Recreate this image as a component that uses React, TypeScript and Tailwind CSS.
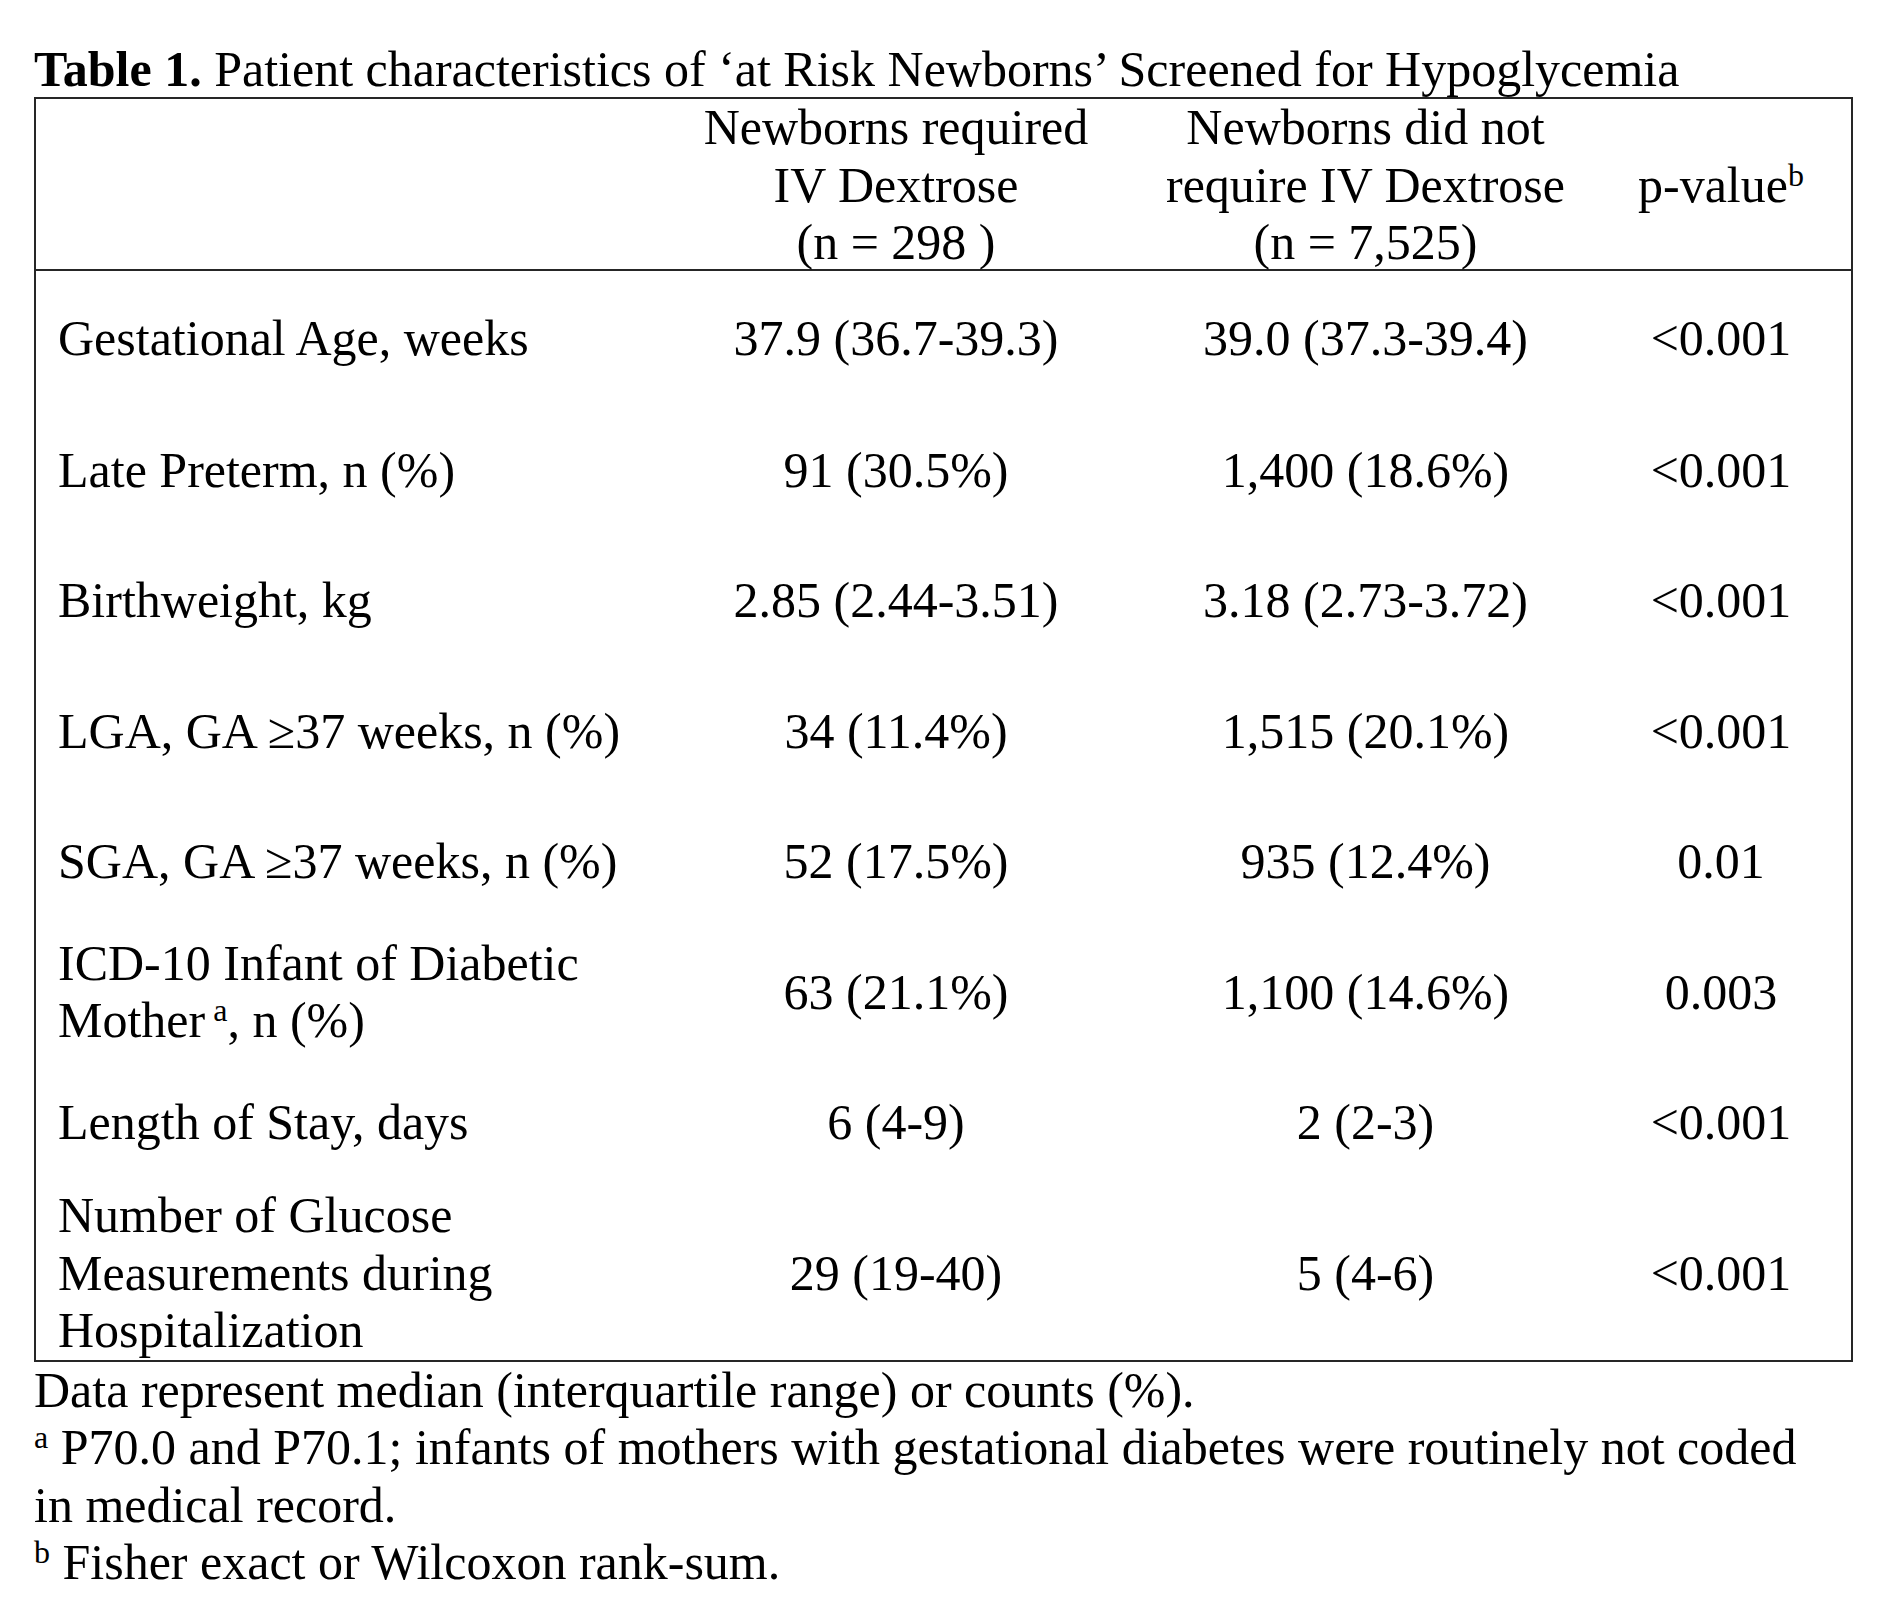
type Row = {
  label: React.ReactNode;
  required: string;
  notRequired: string;
  p: string;
  height: string;
};

const rows: Row[] = [
  {
    label: "Gestational Age, weeks",
    required: "37.9 (36.7-39.3)",
    notRequired: "39.0 (37.3-39.4)",
    p: "<0.001",
    height: "h-[132px] pt-[4px]",
  },
  {
    label: "Late Preterm, n (%)",
    required: "91 (30.5%)",
    notRequired: "1,400 (18.6%)",
    p: "<0.001",
    height: "h-[130.5px] pt-[4px]",
  },
  {
    label: "Birthweight, kg",
    required: "2.85 (2.44-3.51)",
    notRequired: "3.18 (2.73-3.72)",
    p: "<0.001",
    height: "h-[130.5px] pt-[4px]",
  },
  {
    label: "LGA, GA \u226537 weeks, n (%)",
    required: "34 (11.4%)",
    notRequired: "1,515 (20.1%)",
    p: "<0.001",
    height: "h-[130.5px] pt-[4px]",
  },
  {
    label: "SGA, GA \u226537 weeks, n (%)",
    required: "52 (17.5%)",
    notRequired: "935 (12.4%)",
    p: "0.01",
    height: "h-[130.5px] pt-[4px]",
  },
  {
    label: (
      <>
        ICD-10 Infant of Diabetic
        <br />
        Mother<sup className="text-[32px]"> a</sup>, n (%)
      </>
    ),
    required: "63 (21.1%)",
    notRequired: "1,100 (14.6%)",
    p: "0.003",
    height: "h-[130.5px] pt-[4px]",
  },
  {
    label: "Length of Stay, days",
    required: "6 (4-9)",
    notRequired: "2 (2-3)",
    p: "<0.001",
    height: "h-[130.5px] pt-[4px]",
  },
  {
    label: (
      <>
        Number of Glucose
        <br />
        Measurements during
        <br />
        Hospitalization
      </>
    ),
    required: "29 (19-40)",
    notRequired: "5 (4-6)",
    p: "<0.001",
    height: "h-auto pt-[1px]",
  },
];

const cols = "grid grid-cols-[616px_488px_451px_260px]";

export default function App() {
  return (
    <div className="min-h-screen bg-white pl-[34px] pt-[40px] font-['Liberation_Serif','Times_New_Roman',serif] text-[50px] leading-[57.5px] text-black">
      <p className="whitespace-nowrap pt-[1px] leading-[56px]">
        <span className="font-bold">Table 1.</span> Patient characteristics of {"\u2018"}at Risk Newborns{"\u2019"}{" "}
        Screened for Hypoglycemia
      </p>

      <div className="w-[1819px] border-2 border-[#262626]">
        <div className={`${cols} h-[172px] border-b-2 border-[#262626]`}>
          <div />
          <div className="flex items-center justify-center text-center whitespace-nowrap">
            <p>
              Newborns required
              <br />
              IV Dextrose
              <br />
              (n = 298 )
            </p>
          </div>
          <div className="flex items-center justify-center text-center whitespace-nowrap">
            <p>
              Newborns did not
              <br />
              require IV Dextrose
              <br />
              (n = 7,525)
            </p>
          </div>
          <div className="flex items-center justify-center text-center whitespace-nowrap">
            <p>
              p-value<sup className="text-[32px]">b</sup>
            </p>
          </div>
        </div>

        {rows.map((row, i) => (
          <div key={i} className={`${cols} ${row.height}`}>
            <div className="flex items-center whitespace-nowrap pl-[22px]">
              <p>{row.label}</p>
            </div>
            <div className="flex items-center justify-center whitespace-nowrap">{row.required}</div>
            <div className="flex items-center justify-center whitespace-nowrap">{row.notRequired}</div>
            <div className="flex items-center justify-center whitespace-nowrap">{row.p}</div>
          </div>
        ))}
      </div>

      <div className="whitespace-nowrap">
        <p>Data represent median (interquartile range) or counts (%).</p>
        <p>
          <sup className="text-[32px]">a</sup> P70.0 and P70.1; infants of mothers with gestational diabetes were
          routinely not coded
          <br />
          in medical record.
        </p>
        <p>
          <sup className="text-[32px]">b</sup> Fisher exact or Wilcoxon rank-sum.
        </p>
      </div>
    </div>
  );
}
